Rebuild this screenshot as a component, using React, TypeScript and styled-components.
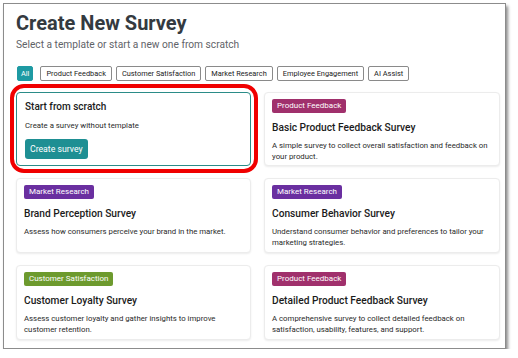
import React from "react";
import styled, { createGlobalStyle } from "styled-components";

const Global = createGlobalStyle`
  html, body { margin: 0; padding: 0; background: #ffffff; }
  body { font-family: Roboto, "Liberation Sans", Arial, sans-serif; }
  * { box-sizing: border-box; }
`;

const Frame = styled.div`
  margin: 3px 0 0 3px;
  width: 503px;
  height: 346px;
  border: 1px solid #8c8c8c;
  box-shadow: 2px 3px 3px rgba(0, 0, 0, 0.45);
  background: #fff;
  padding: 7px 0 0 12px;
  overflow: hidden;
`;

const Title = styled.h1`
  margin: 0;
  font-size: 20px;
  line-height: 24px;
  font-weight: 700;
  color: #343a40;
`;

const Subtitle = styled.p`
  margin: 3px 0 0;
  font-size: 10.2px;
  line-height: 13px;
  color: #5f6368;
`;

const Filters = styled.div`
  display: flex;
  gap: 4px;
  margin-top: 15px;
  height: 15px;
`;

const FilterButton = styled.button<{ $active?: boolean }>`
  height: 15px;
  padding: 0 ${(p) => (p.$active ? "3px" : "5px")};
  font-family: Roboto, "Liberation Sans", Arial, sans-serif;
  font-size: 7.4px;
  line-height: 13px;
  border-radius: 2px;
  border: 1px solid ${(p) => (p.$active ? "#1e9aa3" : "#8a8a8a")};
  background: ${(p) => (p.$active ? "#1e9aa3" : "#fff")};
  color: ${(p) => (p.$active ? "#fff" : "#222")};
  margin-left: ${(p) => (p.$active ? "1px" : "0")};
  margin-right: ${(p) => (p.$active ? "3px" : "0")};
  white-space: nowrap;
`;

const Grid = styled.div`
  display: grid;
  grid-template-columns: 235px 236px;
  grid-template-rows: 74px 75px 75px;
  column-gap: 13px;
  row-gap: 12px;
  margin-top: 11px;
`;

const Card = styled.div<{ $highlight?: boolean }>`
  position: relative;
  background: #fff;
  border-radius: 4px;
  border: 1px solid ${(p) => (p.$highlight ? "#2b8c88" : "#ececec")};
  box-shadow: ${(p) => (p.$highlight ? "none" : "0 1px 2px rgba(0,0,0,0.08)")};
  padding: ${(p) => (p.$highlight ? "7px 8px" : "6px 7px")};
`;

const Annotation = styled.div`
  position: absolute;
  left: -7px;
  right: -8px;
  top: -9px;
  bottom: -8px;
  border: 4px solid #f00000;
  border-radius: 14px;
  pointer-events: none;
`;

const Badge = styled.span<{ $color: string }>`
  display: block;
  width: fit-content;
  height: 14px;
  padding: 0 5px;
  border-radius: 2px;
  background: ${(p) => p.$color};
  color: #fff;
  font-size: 8px;
  line-height: 14px;
`;

const CardTitle = styled.h2<{ $top?: number; $size?: number }>`
  margin: ${(p) => p.$top ?? 8}px 0 0;
  font-size: ${(p) => p.$size ?? 10.2}px;
  line-height: 13px;
  font-weight: 500;
  color: #1b1b1b;
`;

const CardText = styled.p<{ $top?: number }>`
  margin: ${(p) => p.$top ?? 7}px 0 0;
  font-size: 7.8px;
  line-height: 10.5px;
  color: #2a2a2a;
`;

const PrimaryButton = styled.button`
  margin-top: 7px;
  height: 20px;
  padding: 0 5px;
  border: none;
  border-radius: 3px;
  background: #1e8f93;
  color: #fff;
  font-family: Roboto, "Liberation Sans", Arial, sans-serif;
  font-size: 8.7px;
`;

const filters = [
  "Product Feedback",
  "Customer Satisfaction",
  "Market Research",
  "Employee Engagement",
  "AI Assist",
];

const colors: Record<string, string> = {
  "Product Feedback": "#a0306c",
  "Market Research": "#6a2fa0",
  "Customer Satisfaction": "#6d9a2e",
};

const templates = [
  {
    tag: "Product Feedback",
    title: "Basic Product Feedback Survey",
    text: "A simple survey to collect overall satisfaction and feedback on your product.",
  },
  {
    tag: "Market Research",
    title: "Brand Perception Survey",
    text: "Assess how consumers perceive your brand in the market.",
  },
  {
    tag: "Market Research",
    title: "Consumer Behavior Survey",
    text: "Understand consumer behavior and preferences to tailor your marketing strategies.",
  },
  {
    tag: "Customer Satisfaction",
    title: "Customer Loyalty Survey",
    text: "Assess customer loyalty and gather insights to improve customer retention.",
  },
  {
    tag: "Product Feedback",
    title: "Detailed Product Feedback Survey",
    text: "A comprehensive survey to collect detailed feedback on satisfaction, usability, features, and support.",
  },
];

export default function App() {
  return (
    <>
      <Global />
      <Frame>
        <Title>Create New Survey</Title>
        <Subtitle>Select a template or start a new one from scratch</Subtitle>
        <Filters>
          <FilterButton $active>All</FilterButton>
          {filters.map((f) => (
            <FilterButton key={f}>{f}</FilterButton>
          ))}
        </Filters>
        <Grid>
          <Card $highlight>
            <CardTitle $top={0} $size={10}>Start from scratch</CardTitle>
            <CardText $top={8}>Create a survey without template</CardText>
            <PrimaryButton>Create survey</PrimaryButton>
            <Annotation />
          </Card>
          {templates.map((t) => (
            <Card key={t.title}>
              <Badge $color={colors[t.tag]}>{t.tag}</Badge>
              <CardTitle>{t.title}</CardTitle>
              <CardText>{t.text}</CardText>
            </Card>
          ))}
        </Grid>
      </Frame>
    </>
  );
}
